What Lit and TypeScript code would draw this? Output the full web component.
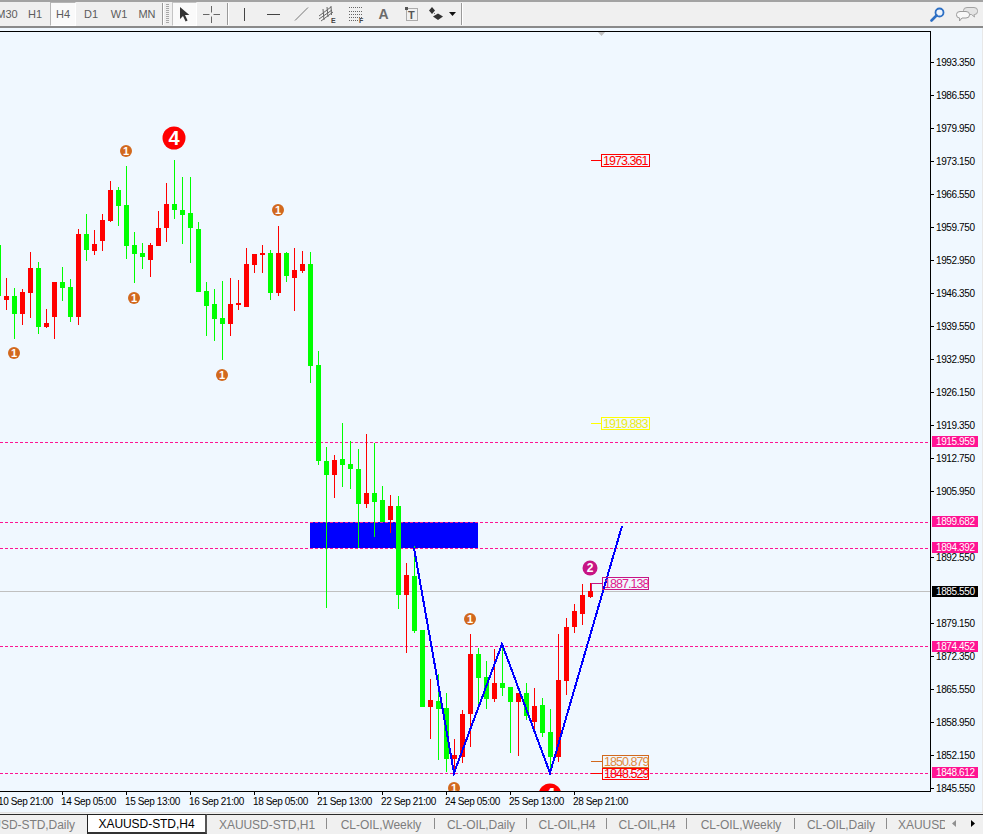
import { LitElement, html, svg, css } from "lit";
import { customElement } from "lit/decorators.js";

type C = [number, "r" | "g", number, number, number, number];
const CANDLES: C[] = [
  [-2,"g",245,245,296,296],[6,"r",278,296,300,310],[14,"g",288,296,314,339],[22,"r",289,292,314,325],
  [30,"r",252,268,293,318],[38,"g",262,268,327,334],[46,"r",309,323,327,328],[54,"r",282,282,317,339],
  [62,"g",267,282,288,301],[70,"g",279,287,317,322],[78,"r",229,234,317,325],[86,"g",214,234,250,261],
  [94,"r",230,244,251,255],[102,"r",214,220,241,251],[110,"r",181,190,221,222],[118,"g",187,190,206,226],
  [126,"g",166,205,246,259],[134,"g",232,245,254,283],[142,"g",243,253,257,269],[150,"r",243,245,260,277],
  [158,"r",211,228,246,246],[166,"r",183,204,228,242],[174,"g",160,204,210,219],[182,"g",177,210,215,244],
  [190,"g",177,213,228,263],[198,"g",222,229,292,292],[206,"g",282,291,306,336],[214,"g",289,304,319,341],
  [222,"g",281,318,324,360],[230,"r",278,304,324,336],[238,"r",280,303,305,310],[246,"r",248,264,307,307],
  [254,"r",254,254,265,273],[262,"r",245,253,255,273],[270,"g",250,253,293,300],[278,"r",226,253,293,296],
  [286,"g",252,253,276,282],[294,"r",248,270,278,311],[302,"r",251,264,271,273],[310,"g",252,264,366,383],
  [318,"g",351,365,461,465],[326,"g",447,461,475,608],[334,"r",455,460,475,498],[342,"g",423,459,465,487],
  [350,"g",441,464,469,489],[358,"g",449,469,504,548],[366,"r",434,493,504,508],[374,"g",443,493,502,537],
  [382,"g",486,500,522,522],[390,"r",495,506,520,533],[398,"g",496,506,595,609],[406,"r",563,575,595,653],
  [414,"g",546,576,631,633],[422,"g",630,630,707,707],[430,"r",679,700,707,739],[438,"g",674,701,709,760],
  [446,"g",693,708,759,772],[454,"r",739,755,759,772],[462,"r",710,714,757,763],[470,"r",634,654,714,747],
  [478,"g",648,654,678,710],[486,"g",661,677,699,709],[494,"r",649,683,699,702],[502,"g",644,683,688,696],
  [510,"g",687,687,702,753],[518,"r",693,693,702,756],[526,"g",683,693,716,720],[534,"r",688,706,722,730],
  [542,"g",698,705,733,737],[550,"g",709,732,757,772],[558,"r",634,680,757,762],[566,"r",618,627,681,695],
  [574,"r",604,611,627,633],[582,"r",584,595,614,625],[590,"r",583,591,597,598],
];

const PRICES: [number, string][] = [
  [62,"1993.350"],[95,"1986.550"],[128,"1979.950"],[161,"1973.150"],[194,"1966.550"],[227,"1959.750"],
  [260,"1952.950"],[293,"1946.350"],[326,"1939.550"],[359,"1932.950"],[392,"1926.150"],[425,"1919.350"],
  [458,"1912.750"],[491,"1905.950"],[557,"1892.550"],[623,"1879.150"],[656,"1872.350"],
  [689,"1865.550"],[722,"1858.950"],[755,"1852.150"],[788,"1845.550"],
];

const DASHED: [number, number, string][] = [
  [442,441,"1915.959"],[522,521,"1899.682"],[548,547,"1894.392"],[646,646,"1874.452"],[773,772,"1848.612"],
];

const DATES: [number, string][] = [
  [-2,"10 Sep 21:00"],[62,"14 Sep 05:00"],[126,"15 Sep 13:00"],[190,"16 Sep 21:00"],[254,"18 Sep 05:00"],
  [318,"21 Sep 13:00"],[382,"22 Sep 21:00"],[446,"24 Sep 05:00"],[510,"25 Sep 13:00"],[574,"28 Sep 21:00"],
];

const ONES: [number, number][] = [[126,151],[278,210],[134,298],[14,353],[222,375],[470,619],[454,788]];

const BOXES: [number, number, number, number, number, string, string, string][] = [
  [601,154,49,13,160,"#ff0000","#ff0000","1973.361"],
  [601,417,49,13,423,"#ffff00","#ecec20","1919.883"],
  [602,577,47,13,583,"#c71585","#e0208c","1887.138"],
  [602,755,47,13,761,"#d2691e","#e08a40","1850.879"],
  [602,768,47,12,773,"#ff0000","#ff0000","1848.529"],
];

const TABS: [string, boolean][] = [
  ["XAUUSD-STD,Daily", false],["XAUUSD-STD,H4", true],["XAUUSD-STD,H1", false],["CL-OIL,Weekly", false],
  ["CL-OIL,Daily", false],["CL-OIL,H4", false],["CL-OIL,H4", false],["CL-OIL,Weekly", false],
  ["CL-OIL,Daily", false],["XAUUSD-STD,H1", false],
];

@customElement("app-root")
export class AppRoot extends LitElement {
  static styles = css`
    :host { display: block; width: 983px; height: 834px; overflow: hidden; background: #f0f0f0; font-family: "Liberation Sans", Arial, sans-serif; }
    .page { display: flex; flex-direction: column; height: 834px; }
    .toolbar { flex: none; height: 24px; padding: 0; border-top: 2px solid #a3a3a3; border-bottom: 2px solid #8a8a8a; background: #f0f0f0; display: flex; align-items: center; overflow: hidden; }
    .tf { flex: none; width: 26px; height: 24px; margin-right: 2px; display: flex; align-items: center; justify-content: center; font-size: 11px; color: #5c5c5c; box-sizing: border-box; }
    .tf.first { margin-left: -6px; }
    .tf.on { background: #fafafa; border: 1px solid #b5b5b5; border-right-color: #fff; border-bottom-color: #fff; }
    .sep { flex: none; width: 1px; height: 22px; background: #9a9a9a; box-shadow: 1px 0 0 #fff; }
    .grip { flex: none; width: 3px; height: 20px; margin: 0 3px 0 3px; background: repeating-linear-gradient(#a8a8a8 0 1px, #f0f0f0 1px 2px); }
    .ico { flex: none; display: block; }
    .btn { flex: none; width: 25px; height: 24px; display: flex; align-items: center; justify-content: center; box-sizing: border-box; }
    .btn.on { background: #fafafa; border: 1px solid #c4c4c4; border-right-color: #fff; border-bottom-color: #fff; }
    .m2 { margin-left: 2px; } .ml3 { margin-left: 3px; } .mx4 { margin: 0 4px; } .mr1 { margin-right: 1px; } .mr2 { margin-right: 2px; } .mr3 { margin-right: 3px; } .mr4 { margin-right: 4px; } .mr5 { margin-right: 5px; } .ml5 { margin-left: 5px; } .ml6 { margin-left: 6px; }
    .letter { font: bold 14px "Liberation Sans", Arial, sans-serif; color: #6a6a6a; }
    .right { margin-left: auto; display: flex; align-items: center; gap: 11px; padding-right: 5px; }
    .chart { flex: none; display: block; width: 983px; height: 784px; }
    .chart text { font-family: "Liberation Sans", Arial, sans-serif; }
    .axis { font-size: 10px; letter-spacing: -0.38px; fill: #000; }
    .lab { font-size: 10px; letter-spacing: -0.38px; fill: #fff; }
    .date { font-size: 10px; letter-spacing: -0.38px; fill: #000; }
    .box { font-size: 12.5px; letter-spacing: -0.95px; }
    .mk { font-size: 11px; font-weight: bold; fill: #fff; text-anchor: middle; }
    .mk4 { font-size: 20px; font-weight: bold; fill: #fff; text-anchor: middle; }
    .mk2 { font-size: 12px; font-weight: bold; fill: #fff; text-anchor: middle; }
    .tabs { flex: none; border-top: 1px solid #e2e2e2; padding-top: 1px; box-sizing: border-box; height: 22px; position: relative; overflow: hidden; }
    .row { display: grid; grid-template-columns: 87px 120px 120px 108px 92px 80px 80px 108px 92px 58px; height: 20px; border-top: 1px solid #2a2a2a; box-sizing: border-box; }
    .tab { display: flex; align-items: center; justify-content: center; overflow: hidden; white-space: nowrap; font-size: 12px; letter-spacing: -0.05px; color: #7d7d7d; position: relative; box-sizing: border-box; }
    .tab.sepd::after { content: ""; position: absolute; right: 0; top: 3px; bottom: 5px; width: 1px; background: #8c8c8c; }
    .tab.first { justify-content: flex-end; padding-right: 12px; }
    .tab.last { justify-content: flex-start; padding-left: 11px; }
    .tab.on { color: #000; background: #fff; border: 1px solid #222; border-right: 2px solid #555; border-bottom: 2px solid #333; margin-top: -1px; }
    .arrows { position: absolute; right: 8px; top: 7px; display: flex; gap: 15px; align-items: center; }
  `;

  private plot() {
    const candles = CANDLES.map(([x, c, hi, top, bot, lo]) => {
      const col = c === "r" ? "#ff0000" : "#00ff00";
      return svg`<rect x=${x} y=${hi} width="1" height=${lo - hi} fill=${col}/><rect x=${x - 2} y=${top} width="5" height=${bot - top} fill=${col}/>`;
    });
    return svg`
      <g clip-path="url(#plot)">
        <rect x="310" y="522" width="168" height="26" fill="#0000ff"/>
        <line x1="0" x2="930" y1="591.5" y2="591.5" stroke="#c0c0c0" stroke-width="1"/>
        ${DASHED.map(([y]) => svg`<line x1="0" x2="930" y1=${y + 0.5} y2=${y + 0.5} stroke="#ff1493" stroke-width="1" stroke-dasharray="3 2"/>`)}
        <g shape-rendering="crispEdges">${candles}</g>
        <polyline points="414,548 454,773 502,644 550,773 622,526" fill="none" stroke="#0000ff" stroke-width="2" shape-rendering="crispEdges"/>
        ${ONES.map(([x, y]) => svg`<circle cx=${x} cy=${y} r="6" fill="#d2691e"/><text class="mk" x=${x} y=${y + 4}>1</text>`)}
        <circle cx="174" cy="138" r="11.5" fill="#ff0000"/><text class="mk4" x="174" y="145">4</text>
        <circle cx="550" cy="795" r="11.5" fill="#ff0000"/><text class="mk4" x="550" y="802">4</text>
        <circle cx="590" cy="568" r="7.5" fill="#c71585"/><text class="mk2" x="590" y="572">2</text>
        <polygon points="597,31 606,31 601.500,36" fill="#c0c0c0"/>
      </g>`;
  }

  private labels() {
    return BOXES.map(([x, y, w, h, ly, stroke, fill, t]) => svg`
      <g shape-rendering="crispEdges">
        <rect x="591" y=${ly} width=${x - 591} height="1" fill=${stroke}/>
        ${y === 577 ? svg`<rect x="591" y=${ly} width="1" height="8" fill=${stroke}/>` : ""}
        <rect x=${x} y=${y} width=${w} height="1" fill=${stroke}/>
        <rect x=${x} y=${y + h - 1} width=${w} height="1" fill=${stroke}/>
        <rect x=${x} y=${y} width="1" height=${h} fill=${stroke}/>
        <rect x=${x + w - 1} y=${y} width="1" height=${h} fill=${stroke}/>
      </g>
      <text class="box" x=${x + 2} y=${y + h - 2} fill=${fill}>${t}</text>`);
  }

  private axes() {
    return svg`
      <g shape-rendering="crispEdges">
        <rect x="0" y="31" width="931" height="1" fill="#000"/>
        <rect x="930" y="31" width="1" height="761" fill="#000"/>
        <rect x="0" y="791" width="931" height="1" fill="#000"/>
        <rect x="982" y="28" width="1" height="784" fill="#e8e8e8"/>
        ${PRICES.map(([y]) => svg`<rect x="931" y=${y} width="3" height="1" fill="#000"/>`)}
        ${DATES.slice(1).map(([x]) => svg`<rect x=${x} y="792" width="1" height="3" fill="#000"/>`)}
      </g>
      ${PRICES.map(([y, t]) => svg`<text class="axis" x="936" y=${y + 4}>${t}</text>`)}
      <text class="axis" x="936" y="526">1899.150</text>
      ${DASHED.map(([, c, t]) => svg`<rect x="932" y=${c - 5} width="46" height="11" fill="#ff1493" shape-rendering="crispEdges"/><text class="lab" x="936" y=${c + 4}>${t}</text>`)}
      <rect x="932" y="586" width="46" height="11" fill="#000" shape-rendering="crispEdges"/>
      <text class="lab" x="936" y="595">1885.550</text>
      ${DATES.map(([x, t]) => svg`<text class="date" x=${x === -2 ? -2 : x - 1} y="805">${t}</text>`)}`;
  }

  render() {
    return html`<div class="page">
      <div class="toolbar">
        <div class="tf first">M30</div><div class="tf">H1</div><div class="tf on">H4</div>
        <div class="tf">D1</div><div class="tf">W1</div><div class="tf">MN</div>
        <div class="sep"></div><div class="grip"></div>
        <div class="btn on"><svg class="ico" width="11" height="15" viewBox="0 0 11 15"><path d="M1 0v12l3-3 2.600 5.600 2-1L6 8h4.400z" fill="#333"/></svg></div>
        <div class="btn m2"><svg class="ico" width="17" height="17" viewBox="0 0 17 17"><path d="M8.500 0v6.500M8.500 10.500V17M0 8.500h6.500M10.500 8.500H17" stroke="#666" fill="none"/></svg></div>
        <div class="sep ml3"></div>
        <div class="btn mx4"><svg class="ico" width="3" height="13" viewBox="0 0 3 13"><path d="M1.500 0v13" stroke="#444"/></svg></div>
        <div class="btn mr3"><svg class="ico" width="13" height="3" viewBox="0 0 13 3"><path d="M0 1.500h13" stroke="#444"/></svg></div>
        <div class="btn mr1"><svg class="ico" width="15" height="14" viewBox="0 0 15 14"><path d="M1 13.500L14 .5" stroke="#777" fill="none"/></svg></div>
        <div class="btn mr4"><svg class="ico" width="19" height="18" viewBox="0 0 19 18"><path d="M1 11L13 2M1 14L14 5M3 16L15 7M5 4l1 11M9 2l1 10M13 1l0.500 9" stroke="#666" fill="none" stroke-width="1"/><text x="13" y="18" font-size="7" font-weight="bold" fill="#444" font-family="Liberation Sans">E</text></svg></div>
        <div class="btn mr2"><svg class="ico" width="17" height="17" viewBox="0 0 17 17"><path d="M1 1.500h13M1 5.500h13M1 8.500h13M1 11.500h13M1 14.500h9" stroke="#666" stroke-dasharray="1 1" fill="none"/><text x="11" y="17" font-size="7" font-weight="bold" fill="#444" font-family="Liberation Sans">F</text></svg></div>
        <div class="btn mr3"><span class="letter">A</span></div>
        <div class="btn mr5"><svg class="ico" width="14" height="15" viewBox="0 0 14 15"><rect x="1.500" y="1.500" width="11" height="12" fill="none" stroke="#666" stroke-dasharray="1 1"/><rect x="0" y="0" width="3" height="3" fill="#555"/><text x="3" y="12" font-size="11" font-weight="bold" fill="#555" font-family="Liberation Sans">T</text></svg></div>
        <svg class="ico" width="14" height="14" viewBox="0 0 14 14"><path d="M0 3.500h6L3 7z M3 0l3 3.500H0z" fill="#333"/><path d="M5 6l1 1M7 8l1 1" stroke="#777"/><path d="M4 9.500L9 6.500l5 3-5 3.500z" fill="#333"/></svg>
        <svg class="ico ml6" width="7" height="4" viewBox="0 0 7 4"><path d="M0 0h7L3.500 4z" fill="#111"/></svg>
        <div class="sep ml5"></div>
        <div class="right">
          <svg class="ico" width="15" height="15" viewBox="0 0 15 15"><circle cx="9.500" cy="5.500" r="4" fill="#eef4fc" stroke="#2d6fc4" stroke-width="1.800"/><path d="M6.500 8.500L1.500 13.500" stroke="#2d6fc4" stroke-width="2.600" stroke-linecap="round"/></svg>
          <svg class="ico" width="22" height="15" viewBox="0 0 22 15"><path d="M11 .5h7q3.500 0 3.500 3v1q0 3-3 3h-.5l.5 2.500-3-2.500h-4.500Q7.500 7.500 7.500 4.500v-1q0-3 3.500-3z" fill="#e4e4e4" stroke="#a2a2a2"/><path d="M4 4.500h6q3.500 0 3.500 3v.5q0 3-3.500 3H6l-2.500 3 .2-3Q.5 11 .5 8v-.5q0-3 3.500-3z" fill="#f8f8f8" stroke="#9a9a9a"/></svg>
        </div>
      </div>
      <svg class="chart" viewBox="0 28 983 784" shape-rendering="auto">
        <defs><clipPath id="plot"><rect x="0" y="28" width="930" height="763"/></clipPath></defs>
        <rect x="0" y="28" width="983" height="784" fill="#f0f8ff"/>
        ${this.plot()}
        ${this.labels()}
        ${this.axes()}
      </svg>
      <div class="tabs">
        <div class="row">
          ${TABS.map(([t, on], i) => {
            const cls = ["tab", on ? "on" : "", i === 0 ? "first" : "", i === TABS.length - 1 ? "last" : "", i >= 2 && i < TABS.length - 1 ? "sepd" : ""].join(" ");
            return html`<div class=${cls}>${t}</div>`;
          })}
        </div>
        <div class="arrows">
          <svg class="ico" width="4" height="7" viewBox="0 0 4 7"><path d="M4 0v7L0 3.500z" fill="#909090"/></svg>
          <svg class="ico" width="4" height="7" viewBox="0 0 4 7"><path d="M0 0v7l4-3.500z" fill="#000"/></svg>
        </div>
      </div>
    </div>`;
  }
}
